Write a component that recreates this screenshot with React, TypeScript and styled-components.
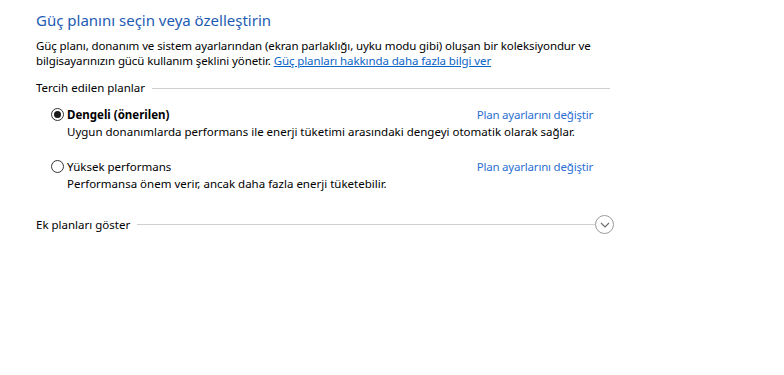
import React from "react";
import styled, { createGlobalStyle } from "styled-components";

const Global = createGlobalStyle`
  html, body { margin: 0; padding: 0; background: #fff; }
  body { font-family: "Noto Sans", "Open Sans", sans-serif; color: #000; }
`;

const Page = styled.div`
  width: 578px;
  padding: 9px 0 0 36px;
  font-size: 11.5px;
`;

const Title = styled.h1`
  margin: 0;
  font-size: 15px;
  font-weight: 400;
  line-height: 22px;
  color: #1c5bb2;
`;

const Intro = styled.p`
  margin: 7px 0 0;
  width: 578px;
  line-height: 15px;
  letter-spacing: -0.1px;
`;

const Link = styled.a`
  color: #0a64c8;
  text-decoration: underline;
  cursor: pointer;
`;

const SectionHead = styled.div<{ $top: number; $lineEnd?: number }>`
  display: flex;
  align-items: center;
  margin-top: ${(p) => p.$top}px;
  line-height: 16px;
  padding-right: ${(p) => p.$lineEnd ?? 4}px;
`;

const HeadText = styled.span`
  margin-right: 7px;
`;

const Rule = styled.span`
  flex: 1;
  height: 1px;
  background: #cfcfcf;
`;

const Plans = styled.div`
  display: flex;
  flex-direction: column;
  gap: 18px;
  margin-top: 10px;
  padding: 0 21px 0 15px;
`;

const Plan = styled.div`
  display: flex;
  flex-direction: column;
`;

const PlanHead = styled.div`
  display: flex;
  align-items: center;
  justify-content: space-between;
  line-height: 17px;
`;

const PlanLabel = styled.label<{ $bold?: boolean }>`
  display: flex;
  align-items: center;
  gap: 3px;
  font-weight: ${(p) => (p.$bold ? 700 : 400)};
`;

const Radio = styled.span<{ $checked?: boolean }>`
  width: 11px;
  height: 11px;
  border: 1px solid #333;
  border-radius: 50%;
  display: inline-flex;
  align-items: center;
  justify-content: center;
  box-sizing: content-box;
  &::after {
    content: "";
    width: 7px;
    height: 7px;
    border-radius: 50%;
    background: ${(p) => (p.$checked ? "#1a1a1a" : "transparent")};
  }
`;

const PlanLink = styled.a`
  color: #2b6fd3;
  cursor: pointer;
  letter-spacing: -0.2px;
`;

const PlanDesc = styled.div`
  padding-left: 16px;
  line-height: 17px;
`;

const Expand = styled.span`
  width: 17px;
  height: 17px;
  border: 1px solid #9a9a9a;
  border-radius: 50%;
  display: inline-flex;
  align-items: center;
  justify-content: center;
`;

export default function App() {
  return (
    <>
      <Global />
      <Page>
        <Title>Güç planını seçin veya özelleştirin</Title>
        <Intro>
          Güç planı, donanım ve sistem ayarlarından (ekran parlaklığı, uyku modu gibi) oluşan bir
          koleksiyondur ve bilgisayarınızın gücü kullanım şeklini yönetir.{" "}
          <Link>Güç planları hakkında daha fazla bilgi ver</Link>
        </Intro>
        <SectionHead $top={12}>
          <HeadText>Tercih edilen planlar</HeadText>
          <Rule />
        </SectionHead>
        <Plans>
          <Plan>
            <PlanHead>
              <PlanLabel $bold>
                <Radio $checked />
                Dengeli (önerilen)
              </PlanLabel>
              <PlanLink>Plan ayarlarını değiştir</PlanLink>
            </PlanHead>
            <PlanDesc>
              Uygun donanımlarda performans ile enerji tüketimi arasındaki dengeyi otomatik olarak
              sağlar.
            </PlanDesc>
          </Plan>
          <Plan>
            <PlanHead>
              <PlanLabel>
                <Radio />
                Yüksek performans
              </PlanLabel>
              <PlanLink>Plan ayarlarını değiştir</PlanLink>
            </PlanHead>
            <PlanDesc>Performansa önem verir, ancak daha fazla enerji tüketebilir.</PlanDesc>
          </Plan>
        </Plans>
        <SectionHead $top={23} $lineEnd={0}>
          <HeadText>Ek planları göster</HeadText>
          <Rule />
          <Expand>
            <svg width="10" height="6" viewBox="0 0 10 6" fill="none">
              <path d="M1 1l4 4 4-4" stroke="#6a6a6a" strokeWidth="1.1" />
            </svg>
          </Expand>
        </SectionHead>
      </Page>
    </>
  );
}
